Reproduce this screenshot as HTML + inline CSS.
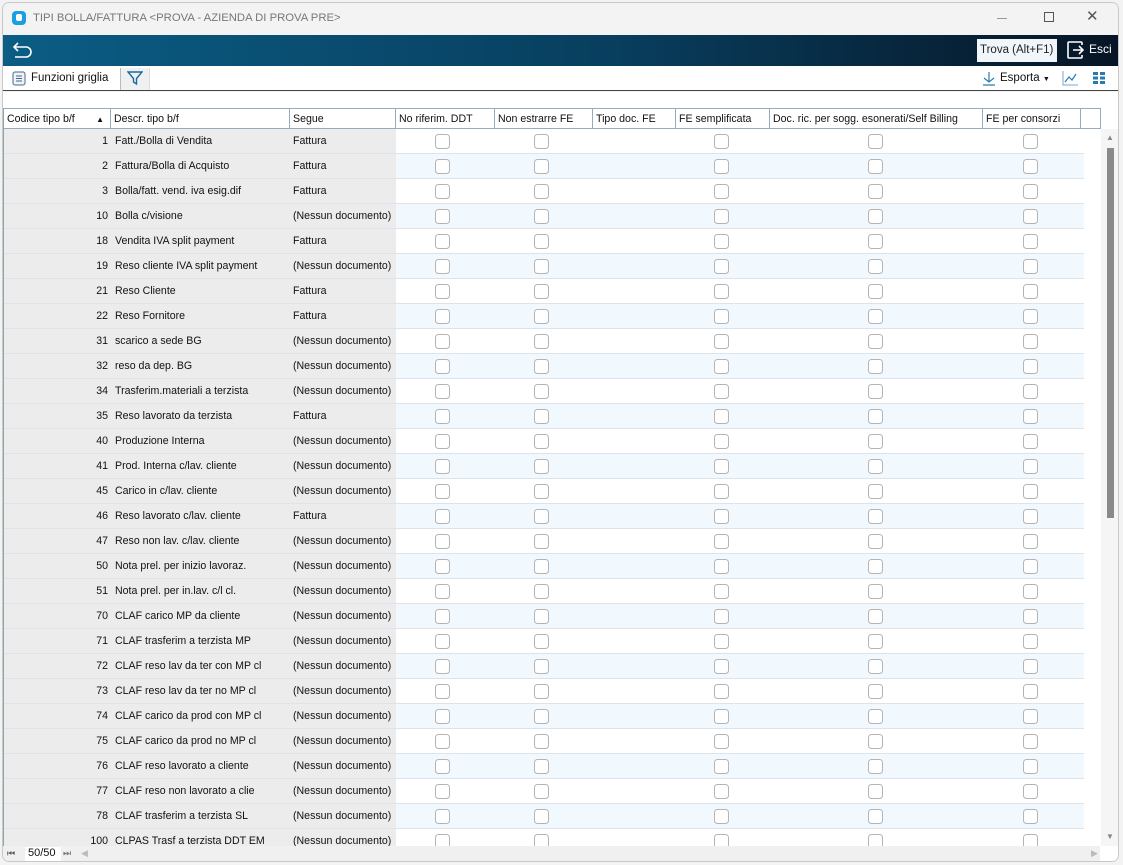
<!DOCTYPE html>
<html><head><meta charset="utf-8"><style>
*{margin:0;padding:0;box-sizing:border-box}
body{width:1123px;height:865px;background:#f3f3f3;font-family:"Liberation Sans",sans-serif;font-size:12px;color:#111;position:relative;overflow:hidden}
.win{position:absolute;left:2px;top:2px;width:1117px;height:860px;border:1px solid #c8c8c8;border-radius:7px;background:#f3f3f3;overflow:hidden}
.title{position:absolute;left:0;top:0;width:100%;height:32px;background:#f3f3f3}
.title .t{position:absolute;left:30px;top:9px;color:#777;font-size:11.3px}
.logo{position:absolute;left:9px;top:8px;width:14px;height:14px;background:#1a9fe0;border-radius:4px}
.logo:after{content:"";position:absolute;left:4px;top:3px;width:6px;height:7px;background:#fff;border-radius:2px}
.dark{position:absolute;left:0;top:32px;width:100%;height:31px;background:linear-gradient(90deg,#0b5d85,#083e5e 55%,#061525)}
.trova{position:absolute;left:974px;top:4px;width:80px;height:23px;background:#f0f6fa;color:#222;font-size:11.5px;padding:5px 0 0 3px}
.esci{position:absolute;left:1086px;top:7px;color:#fff;font-size:12px}
.tb{position:absolute;left:0;top:63px;width:100%;height:25px;background:#fff;border-bottom:1px solid #444}
.blank{position:absolute;left:0;top:89px;width:100%;height:16px;background:#fff}
.grid{position:absolute;left:0;top:105px;width:1115px;height:738px;background:#fff;border-left:1px solid #8aa}
.hd{position:absolute;top:0;height:21px;border-top:1px solid #9ab;border-bottom:1px solid #9ab;border-right:1px solid #9ab;padding:4px 3px;font-size:10.6px;background:#fff;white-space:nowrap}
.row{position:absolute;left:0;width:1080px;height:25px;border-bottom:1px solid #dde3e8;font-size:10.6px}
.row.a .c{background:#f1f8fe}
.g{position:absolute;left:0;top:0;width:392px;height:24px;background:#ececec}
.n{position:absolute;width:104px;text-align:right;top:6px}
.d{position:absolute;left:111px;top:6px;white-space:nowrap}
.s{position:absolute;left:289px;top:6px;white-space:nowrap}
.c{position:absolute;left:392px;top:0;width:688px;height:24px}
.sb{position:absolute;left:1097px;top:21px;width:18px;height:717px;background:#f5f5f5}
.foot{position:absolute;left:0;top:843px;width:1115px;height:16px;background:#f0f0f0;font-size:11px}
</style></head><body>
<div class="win">
<div class="title"><div class="logo"></div><div class="t">TIPI BOLLA/FATTURA &lt;PROVA - AZIENDA DI PROVA PRE&gt;</div>
<div style="position:absolute;left:994px;top:15px;width:10px;height:1px;background:#999"></div>
<div style="position:absolute;left:1041px;top:9px;width:10px;height:10px;border:1px solid #555"></div>
<div style="position:absolute;left:1083px;top:4px;font-size:15px;color:#555">✕</div></div>
<div class="dark"><svg style="position:absolute;left:9px;top:7px" width="22" height="16" viewBox="0 0 22 16"><path d="M6 1 L2 5 L6 9 M2 5 H14 a5 5 0 0 1 0 10 H3" fill="none" stroke="#fff" stroke-width="1.6"/></svg>
<div class="trova">Trova (Alt+F1)</div>
<svg style="position:absolute;left:1063px;top:5px" width="20" height="20" viewBox="0 0 20 20"><path d="M8 2 H3 a1 1 0 0 0 -1 1 V17 a1 1 0 0 0 1 1 H8 M7 10 H17 M13 6 L17 10 L13 14" fill="none" stroke="#fff" stroke-width="1.6"/><path d="M8 2 H15 a1 1 0 0 1 1 1 V5 M16 15 V17 a1 1 0 0 1 -1 1 H8" fill="none" stroke="#fff" stroke-width="1.6"/></svg>
<div class="esci">Esci</div></div>
<div class="tb">
<svg style="position:absolute;left:9px;top:5px" width="14" height="15"><rect x="1" y="1" width="12" height="13" rx="2" fill="#eef3f8" stroke="#4a6a8a"/><path d="M4 5H10M4 7.5H10M4 10H10" stroke="#4a6a8a"/></svg>
<div style="position:absolute;left:28px;top:6px;font-size:11.5px">Funzioni griglia</div>
<div style="position:absolute;left:117px;top:2px;width:30px;height:22px;background:#eef0f2;border-left:1px solid #bbb;border-right:1px solid #ddd"></div>
<svg style="position:absolute;left:124px;top:5px" width="16" height="15"><path d="M1 1H15L9.5 7.5V13L6.5 11V7.5Z" fill="none" stroke="#1a6a9a" stroke-width="1.4"/></svg>
<svg style="position:absolute;left:979px;top:5px" width="14" height="15"><path d="M7 1V11M2 7L7 11L12 7M1 14H13" fill="none" stroke="#2a7ab0" stroke-width="1.2"/></svg>
<div style="position:absolute;left:997px;top:6px;font-size:11.5px">Esporta <span style="font-size:7px">▼</span></div>
<svg style="position:absolute;left:1059px;top:4px" width="17" height="16"><path d="M1 1V15H16" fill="none" stroke="#7aaacc"/><path d="M3 12L7 7L10 10L14 4" fill="none" stroke="#2a7ab0" stroke-width="1.2"/></svg>
<svg style="position:absolute;left:1090px;top:6px" width="12" height="12"><g fill="#2a7ab0"><rect x="0" y="0" width="5" height="3"/><rect x="7" y="0" width="5" height="3"/><rect x="0" y="4.5" width="5" height="3"/><rect x="7" y="4.5" width="5" height="3"/><rect x="0" y="9" width="5" height="3"/><rect x="7" y="9" width="5" height="3"/></g></svg>
</div>
<div class="blank"></div>
<div class="grid">
<div class="hd" style="left:0;width:107px">Codice tipo b/f<span style="position:absolute;right:6px;font-size:8px;top:6px">▲</span></div>
<div class="hd" style="left:107px;width:179px">Descr. tipo b/f</div>
<div class="hd" style="left:286px;width:106px">Segue</div>
<div class="hd" style="left:392px;width:99px">No riferim. DDT</div>
<div class="hd" style="left:491px;width:98px">Non estrarre FE</div>
<div class="hd" style="left:589px;width:83px">Tipo doc. FE</div>
<div class="hd" style="left:672px;width:94px">FE semplificata</div>
<div class="hd" style="left:766px;width:213px">Doc. ric. per sogg. esonerati/Self Billing</div>
<div class="hd" style="left:979px;width:98px">FE per consorzi</div>
<div class="hd" style="left:1077px;width:20px"></div>

<div style="position:absolute;top:21px;left:0;width:1097px;height:717px;overflow:hidden">
<div class="row" style="top:0"><div class="g"></div><div class="c"></div><div class="n">1</div><div class="d">Fatt./Bolla di Vendita</div><div class="s">Fattura</div></div>
<div class="row a" style="top:25px"><div class="g"></div><div class="c"></div><div class="n">2</div><div class="d">Fattura/Bolla di Acquisto</div><div class="s">Fattura</div></div>
<div class="row" style="top:50px"><div class="g"></div><div class="c"></div><div class="n">3</div><div class="d">Bolla/fatt. vend. iva esig.dif</div><div class="s">Fattura</div></div>
<div class="row a" style="top:75px"><div class="g"></div><div class="c"></div><div class="n">10</div><div class="d">Bolla c/visione</div><div class="s">(Nessun documento)</div></div>
<div class="row" style="top:100px"><div class="g"></div><div class="c"></div><div class="n">18</div><div class="d">Vendita IVA split payment</div><div class="s">Fattura</div></div>
<div class="row a" style="top:125px"><div class="g"></div><div class="c"></div><div class="n">19</div><div class="d">Reso cliente IVA split payment</div><div class="s">(Nessun documento)</div></div>
<div class="row" style="top:150px"><div class="g"></div><div class="c"></div><div class="n">21</div><div class="d">Reso Cliente</div><div class="s">Fattura</div></div>
<div class="row a" style="top:175px"><div class="g"></div><div class="c"></div><div class="n">22</div><div class="d">Reso Fornitore</div><div class="s">Fattura</div></div>
<div class="row" style="top:200px"><div class="g"></div><div class="c"></div><div class="n">31</div><div class="d">scarico a sede BG</div><div class="s">(Nessun documento)</div></div>
<div class="row a" style="top:225px"><div class="g"></div><div class="c"></div><div class="n">32</div><div class="d">reso da dep. BG</div><div class="s">(Nessun documento)</div></div>
<div class="row" style="top:250px"><div class="g"></div><div class="c"></div><div class="n">34</div><div class="d">Trasferim.materiali a terzista</div><div class="s">(Nessun documento)</div></div>
<div class="row a" style="top:275px"><div class="g"></div><div class="c"></div><div class="n">35</div><div class="d">Reso lavorato da terzista</div><div class="s">Fattura</div></div>
<div class="row" style="top:300px"><div class="g"></div><div class="c"></div><div class="n">40</div><div class="d">Produzione Interna</div><div class="s">(Nessun documento)</div></div>
<div class="row a" style="top:325px"><div class="g"></div><div class="c"></div><div class="n">41</div><div class="d">Prod. Interna c/lav. cliente</div><div class="s">(Nessun documento)</div></div>
<div class="row" style="top:350px"><div class="g"></div><div class="c"></div><div class="n">45</div><div class="d">Carico in c/lav. cliente</div><div class="s">(Nessun documento)</div></div>
<div class="row a" style="top:375px"><div class="g"></div><div class="c"></div><div class="n">46</div><div class="d">Reso lavorato c/lav. cliente</div><div class="s">Fattura</div></div>
<div class="row" style="top:400px"><div class="g"></div><div class="c"></div><div class="n">47</div><div class="d">Reso non lav. c/lav. cliente</div><div class="s">(Nessun documento)</div></div>
<div class="row a" style="top:425px"><div class="g"></div><div class="c"></div><div class="n">50</div><div class="d">Nota prel. per inizio lavoraz.</div><div class="s">(Nessun documento)</div></div>
<div class="row" style="top:450px"><div class="g"></div><div class="c"></div><div class="n">51</div><div class="d">Nota prel. per in.lav. c/l cl.</div><div class="s">(Nessun documento)</div></div>
<div class="row a" style="top:475px"><div class="g"></div><div class="c"></div><div class="n">70</div><div class="d">CLAF carico MP da cliente</div><div class="s">(Nessun documento)</div></div>
<div class="row" style="top:500px"><div class="g"></div><div class="c"></div><div class="n">71</div><div class="d">CLAF trasferim a terzista MP</div><div class="s">(Nessun documento)</div></div>
<div class="row a" style="top:525px"><div class="g"></div><div class="c"></div><div class="n">72</div><div class="d">CLAF reso lav da ter con MP cl</div><div class="s">(Nessun documento)</div></div>
<div class="row" style="top:550px"><div class="g"></div><div class="c"></div><div class="n">73</div><div class="d">CLAF reso lav da ter no MP cl</div><div class="s">(Nessun documento)</div></div>
<div class="row a" style="top:575px"><div class="g"></div><div class="c"></div><div class="n">74</div><div class="d">CLAF carico da prod con MP cl</div><div class="s">(Nessun documento)</div></div>
<div class="row" style="top:600px"><div class="g"></div><div class="c"></div><div class="n">75</div><div class="d">CLAF carico da prod no MP cl</div><div class="s">(Nessun documento)</div></div>
<div class="row a" style="top:625px"><div class="g"></div><div class="c"></div><div class="n">76</div><div class="d">CLAF reso lavorato a cliente</div><div class="s">(Nessun documento)</div></div>
<div class="row" style="top:650px"><div class="g"></div><div class="c"></div><div class="n">77</div><div class="d">CLAF reso non lavorato a clie</div><div class="s">(Nessun documento)</div></div>
<div class="row a" style="top:675px"><div class="g"></div><div class="c"></div><div class="n">78</div><div class="d">CLAF trasferim a terzista SL</div><div class="s">(Nessun documento)</div></div>
<div class="row" style="top:700px"><div class="g"></div><div class="c"></div><div class="n">100</div><div class="d">CLPAS Trasf a terzista DDT EM</div><div class="s">(Nessun documento)</div></div>
<svg style="position:absolute;left:0;top:0" width="1080" height="730">
<defs><pattern id="p" x="0" y="0" width="1080" height="25" patternUnits="userSpaceOnUse">
<g fill="#fff" stroke="#b4b4b4"><rect x="431.5" y="5.5" width="14" height="14" rx="3"/><rect x="530.5" y="5.5" width="14" height="14" rx="3"/><rect x="710.5" y="5.5" width="14" height="14" rx="3"/><rect x="864.5" y="5.5" width="14" height="14" rx="3"/><rect x="1019.5" y="5.5" width="14" height="14" rx="3"/></g></pattern></defs>
<rect x="0" y="0" width="1080" height="730" fill="url(#p)"/></svg>
</div>
<div class="sb"><div style="position:absolute;left:5px;top:4px;font-size:8px;color:#888">▲</div>
<div style="position:absolute;left:6px;top:19px;width:7px;height:370px;background:#8a8a8a"></div>
<div style="position:absolute;left:5px;top:703px;font-size:8px;color:#888">▼</div></div>
</div>
<div class="foot"><span style="position:absolute;left:4px;top:2px;font-size:9px;color:#555">⏮</span><span style="position:absolute;left:22px;top:1px;width:36px;height:14px;background:#fff;padding-left:3px">50/50</span><span style="position:absolute;left:60px;top:2px;font-size:9px;color:#777">⏭</span><span style="position:absolute;left:78px;top:2px;font-size:9px;color:#bbb">◀</span><span style="position:absolute;left:1088px;top:2px;font-size:9px;color:#bbb">▶</span><div style="position:absolute;left:1097px;top:0;width:18px;height:16px;background:#fff"></div></div>
</div>
</body></html>
